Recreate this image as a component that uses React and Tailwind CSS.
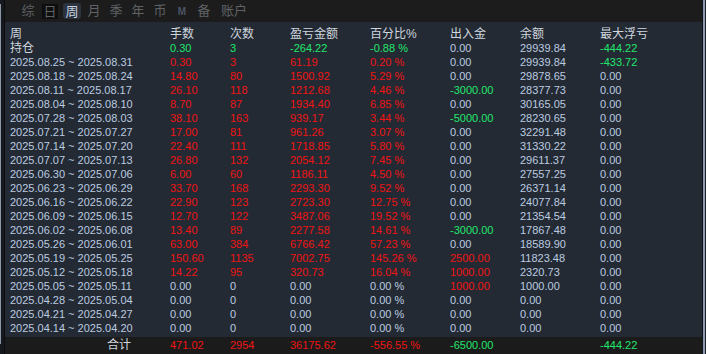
const R = 'text-[#f01414]';
const G = 'text-[#22e66c]';
const N = 'text-[#bccbe0]';

const tabs = [
  { t: '综' },
  { t: '日', box: 'bg-[#0e0e0e] w-[16px] h-[15px]' },
  { t: '周', box: 'bg-[#2a333f] w-[18px] h-[16px] rounded-[3px] text-[#c9d3e0]' },
  { t: '月' },
  { t: '季' },
  { t: '年' },
  { t: '币' },
  { t: 'M', m: true },
  { t: '备' },
  { t: '账户', wide: true },
];

// [date, 手数, 次数, 盈亏, 百分比, 出入金, 余额, 最大浮亏, colors]
const rows = [
  ['2025.08.25 ~ 2025.08.31', '0.30', '3', '61.19', '0.20 %', '0.00', '29939.84', '-433.72', 'rrrrnng'],
  ['2025.08.18 ~ 2025.08.24', '14.80', '80', '1500.92', '5.29 %', '0.00', '29878.65', '0.00', 'rrrrnnn'],
  ['2025.08.11 ~ 2025.08.17', '26.10', '118', '1212.68', '4.46 %', '-3000.00', '28377.73', '0.00', 'rrrrgnn'],
  ['2025.08.04 ~ 2025.08.10', '8.70', '87', '1934.40', '6.85 %', '0.00', '30165.05', '0.00', 'rrrrnnn'],
  ['2025.07.28 ~ 2025.08.03', '38.10', '163', '939.17', '3.44 %', '-5000.00', '28230.65', '0.00', 'rrrrgnn'],
  ['2025.07.21 ~ 2025.07.27', '17.00', '81', '961.26', '3.07 %', '0.00', '32291.48', '0.00', 'rrrrnnn'],
  ['2025.07.14 ~ 2025.07.20', '22.40', '111', '1718.85', '5.80 %', '0.00', '31330.22', '0.00', 'rrrrnnn'],
  ['2025.07.07 ~ 2025.07.13', '26.80', '132', '2054.12', '7.45 %', '0.00', '29611.37', '0.00', 'rrrrnnn'],
  ['2025.06.30 ~ 2025.07.06', '6.00', '60', '1186.11', '4.50 %', '0.00', '27557.25', '0.00', 'rrrrnnn'],
  ['2025.06.23 ~ 2025.06.29', '33.70', '168', '2293.30', '9.52 %', '0.00', '26371.14', '0.00', 'rrrrnnn'],
  ['2025.06.16 ~ 2025.06.22', '22.90', '123', '2723.30', '12.75 %', '0.00', '24077.84', '0.00', 'rrrrnnn'],
  ['2025.06.09 ~ 2025.06.15', '12.70', '122', '3487.06', '19.52 %', '0.00', '21354.54', '0.00', 'rrrrnnn'],
  ['2025.06.02 ~ 2025.06.08', '13.40', '89', '2277.58', '14.61 %', '-3000.00', '17867.48', '0.00', 'rrrrgnn'],
  ['2025.05.26 ~ 2025.06.01', '63.00', '384', '6766.42', '57.23 %', '0.00', '18589.90', '0.00', 'rrrrnnn'],
  ['2025.05.19 ~ 2025.05.25', '150.60', '1135', '7002.75', '145.26 %', '2500.00', '11823.48', '0.00', 'rrrrrnn'],
  ['2025.05.12 ~ 2025.05.18', '14.22', '95', '320.73', '16.04 %', '1000.00', '2320.73', '0.00', 'rrrrrnn'],
  ['2025.05.05 ~ 2025.05.11', '0.00', '0', '0.00', '0.00 %', '1000.00', '1000.00', '0.00', 'nnnnrnn'],
  ['2025.04.28 ~ 2025.05.04', '0.00', '0', '0.00', '0.00 %', '0.00', '0.00', '0.00', 'nnnnnnn'],
  ['2025.04.21 ~ 2025.04.27', '0.00', '0', '0.00', '0.00 %', '0.00', '0.00', '0.00', 'nnnnnnn'],
  ['2025.04.14 ~ 2025.04.20', '0.00', '0', '0.00', '0.00 %', '0.00', '0.00', '0.00', 'nnnnnnn'],
];

const colorOf = (c) => (c === 'r' ? R : c === 'g' ? G : N);
const grid = 'grid grid-cols-[160px_60px_60px_80px_80px_70px_80px_1fr] pl-[5px]';

function Row({ r }) {
  return (
    <div className={`${grid} h-[14px] leading-[14px] text-[11px]`}>
      <div className={N}>{r[0]}</div>
      {r.slice(1, 8).map((v, i) => (
        <div key={i} className={colorOf(r[8][i])}>{v}</div>
      ))}
    </div>
  );
}

export default function App() {
  const heads = ['周', '手数', '次数', '盈亏金额', '百分比%', '出入金', '余额', '最大浮亏'];
  return (
    <div
      className="flex w-[706px] h-[354px] bg-[#232a33] overflow-hidden"
      style={{ fontFamily: '"Liberation Sans", "Noto Sans CJK SC", sans-serif' }}
    >
      <div className="w-[5px] flex bg-[#15181c]">
        <div className="w-[1px] bg-[#8c96a4] mt-[4px] h-[340px]" />
        <div className="flex-1" />
        <div className="w-[1px] bg-[#0c0c0c]" />
      </div>

      <div className="flex-1 flex flex-col">
        <div className="h-[22px] bg-[#1c1c1c] flex items-center pl-[12px] text-[13px] text-[#5f6266]">
          {tabs.map((t) => (
            <div
              key={t.t}
              className={`${t.wide ? 'w-[38px]' : 'w-[22px]'} flex justify-center items-center`}
            >
              {t.box ? (
                <span className={`${t.box} flex items-center justify-center leading-none`}>{t.t}</span>
              ) : t.m ? (
                <span className="text-[10px] font-bold text-[#4a5566]">{t.t}</span>
              ) : (
                <span>{t.t}</span>
              )}
            </div>
          ))}
        </div>

        <div className="flex-1 pt-[5px]">
          <div className={`${grid} h-[14px] leading-[14px] text-[12px] text-[#cfd6df]`}>
            {heads.map((h) => (
              <div key={h}>{h}</div>
            ))}
          </div>
          <div className={`${grid} h-[14px] leading-[14px] text-[11px]`}>
            <div className="text-[12px] text-[#cfd6df]">持仓</div>
            <div className={G}>0.30</div>
            <div className={G}>3</div>
            <div className={G}>-264.22</div>
            <div className={G}>-0.88 %</div>
            <div className={N}>0.00</div>
            <div className={N}>29939.84</div>
            <div className={G}>-444.22</div>
          </div>
          {rows.map((r) => (
            <Row key={r[0]} r={r} />
          ))}
        </div>

        <div className={`${grid} h-[17px] leading-[17px] text-[11px] bg-[#1b1b1b]`}>
          <div className="text-[12px] text-[#cfd6df] pl-[97px]">合计</div>
          <div className={R}>471.02</div>
          <div className={R}>2954</div>
          <div className={R}>36175.62</div>
          <div className={R}>-556.55 %</div>
          <div className={G}>-6500.00</div>
          <div />
          <div className={G}>-444.22</div>
        </div>
      </div>

      <div className="w-[4px] flex">
        <div className="w-[1px] bg-[#121418]" />
        <div className="w-[2px] bg-[#8d9bb0]" />
        <div className="w-[1px] bg-[#1b1f24]" />
      </div>
    </div>
  );
}
